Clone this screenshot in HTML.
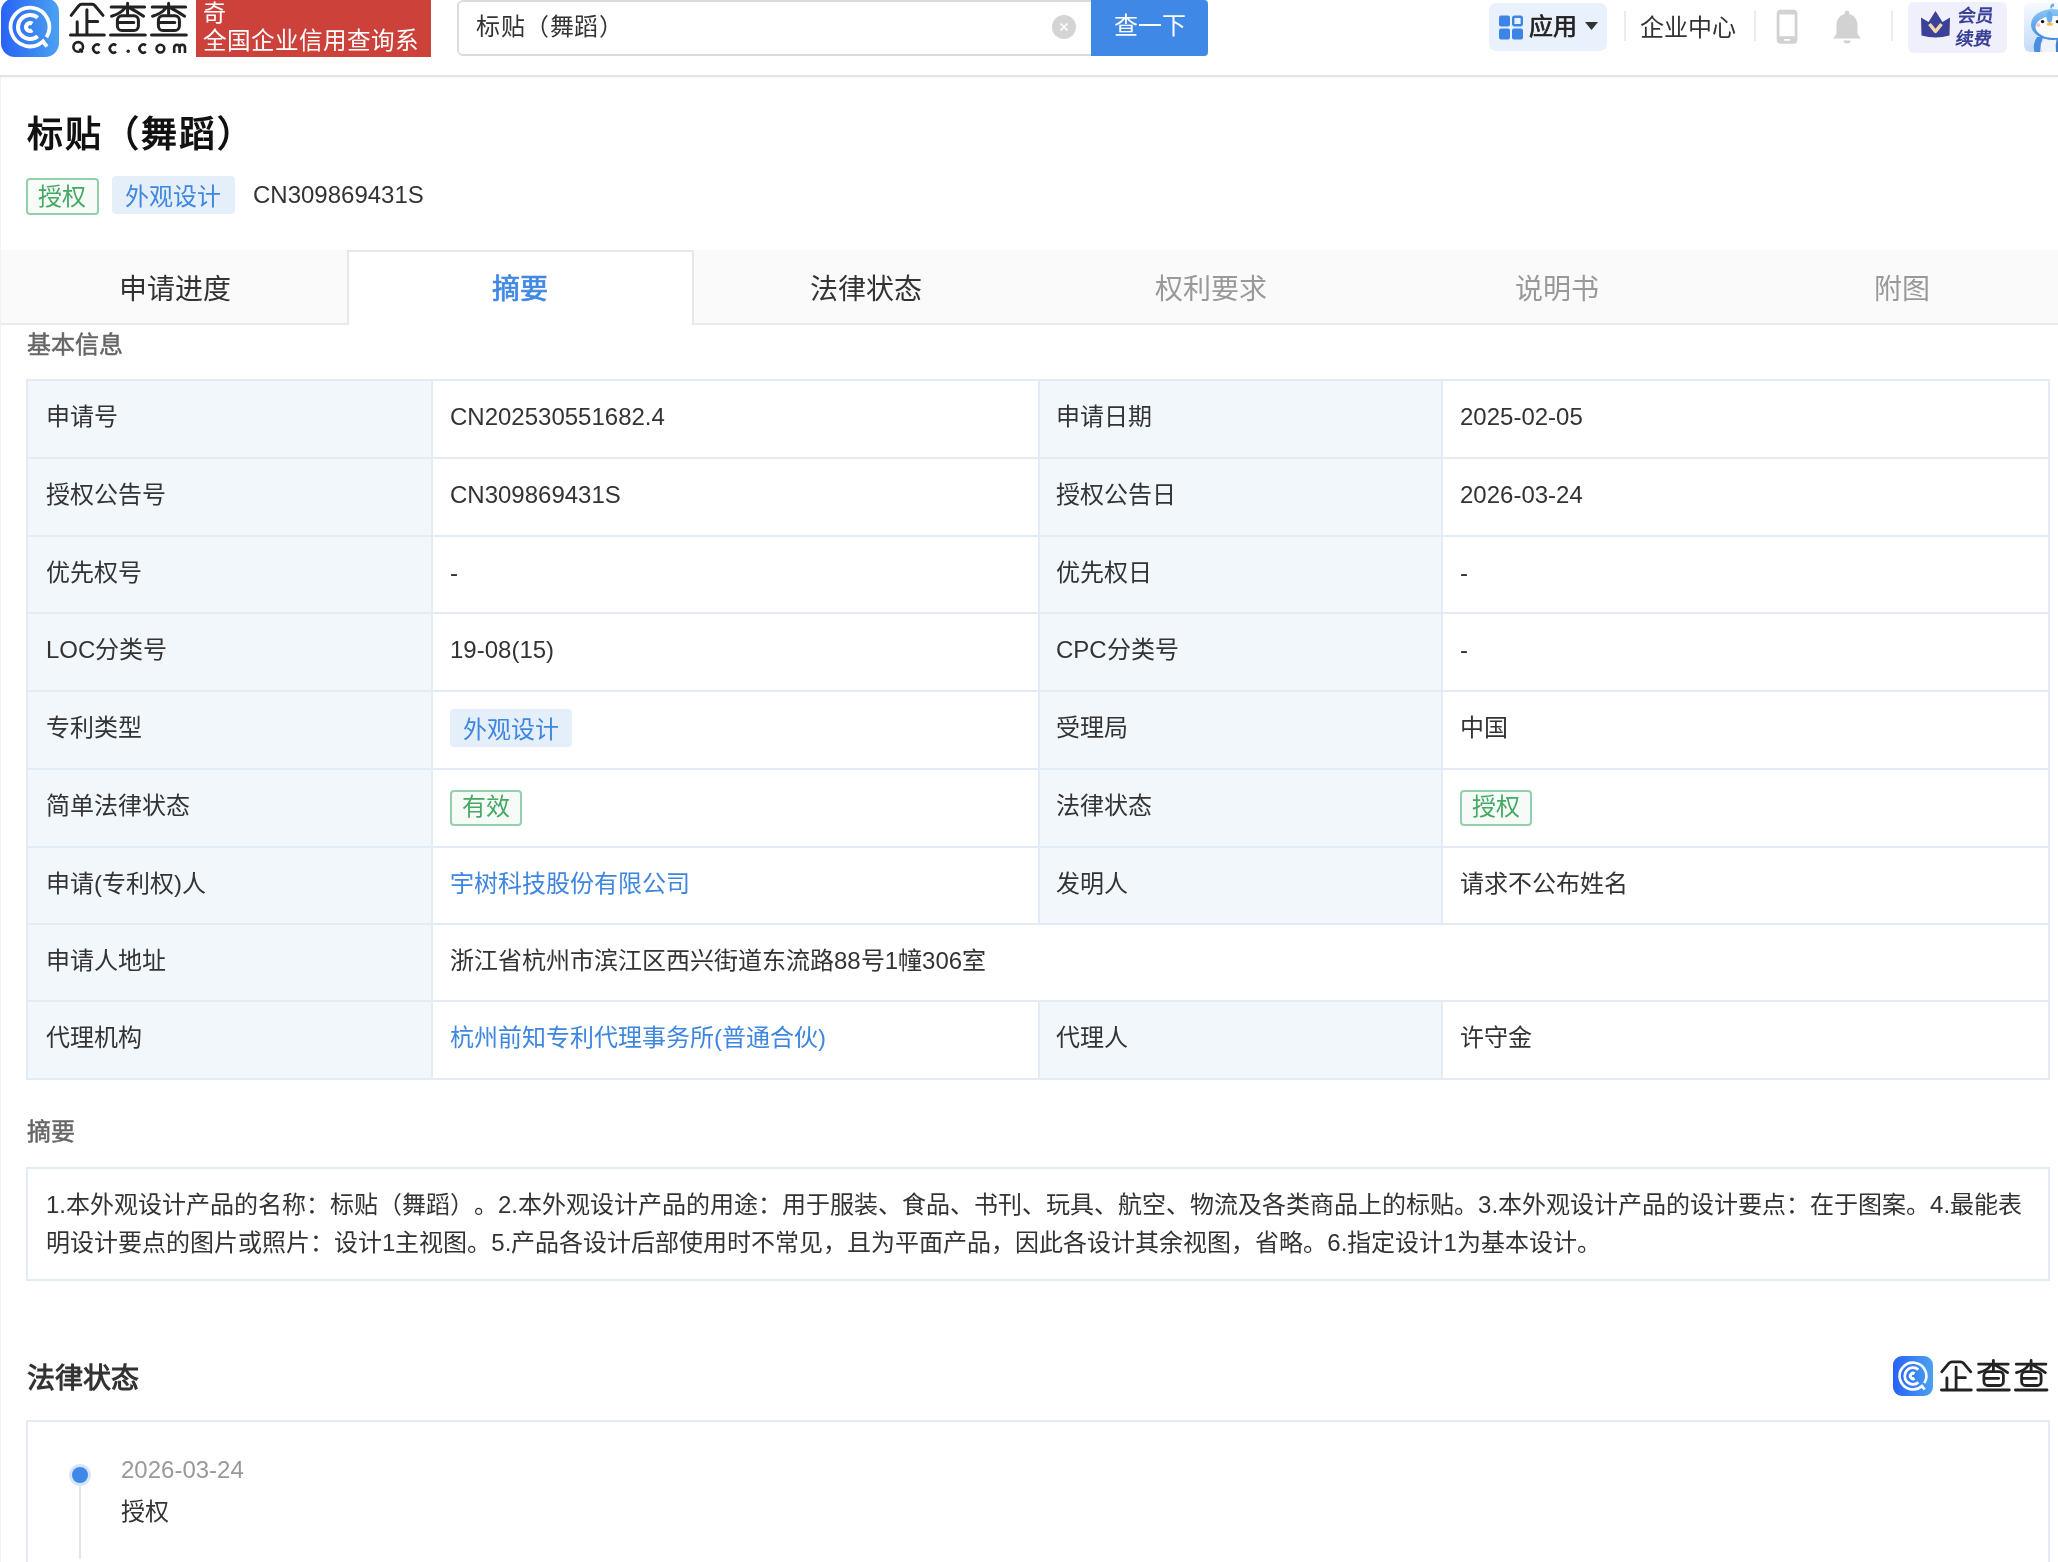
<!DOCTYPE html>
<html lang="zh-CN"><head><meta charset="utf-8">
<style>
*{margin:0;padding:0;box-sizing:border-box}
html,body{width:2058px;height:1562px;overflow:hidden;background:#fff}
body{font-family:"Liberation Sans",sans-serif;color:#333;position:relative;text-spacing-trim:space-all;will-change:transform;background:#fff}
.a{position:absolute;white-space:nowrap}
.hdr{position:absolute;left:0;top:0;width:2058px;height:77px;background:#fff;border-bottom:2px solid #e3e3e3;box-shadow:0 1px 3px rgba(0,0,0,0.035);z-index:2}
.lside{position:absolute;left:0;top:77px;width:1px;height:1485px;background:#f2f2f2}
.t24{font-size:24px;line-height:28px}
.tab{position:absolute;top:250px;height:75px;width:347px;background:#fafafa;border-bottom:2px solid #ebebeb;border-right:2px solid #ebebeb;font-size:28px;line-height:75px;padding-top:3px;text-align:center;color:#999}
.tab.act{background:#fff;border:2px solid #ebebeb;border-bottom:none;padding-top:0;color:#3f88e5;font-weight:bold}
.cell{position:absolute;display:flex;align-items:center;font-size:24px;line-height:28px;padding-bottom:4px;color:#333;white-space:nowrap}
.tb{background:#e4effa;color:#3e86e0;border-radius:4px;line-height:34px;height:38px;padding:4px 13px 0 13px;display:inline-block}
.tg{background:#f6fbf8;color:#45a865;border:2px solid #92d0ac;border-radius:4px;line-height:29px;height:36px;padding:0 10px 3px 10px;display:inline-block;position:relative;top:1.5px}
.tbl{position:absolute;left:26px;top:379px;width:2024px;height:701px;border:2px solid #e3ebf5;background:#fff}
.hl{position:absolute;left:26px;width:2024px;height:2px;background:#e3ebf5}
.vl{position:absolute;width:2px;background:#e3ebf5}
.lbg{position:absolute;background:#f2f7fc}
.lab{position:absolute;font-size:24px;line-height:28px;color:#333;white-space:nowrap}
.val{position:absolute;font-size:24px;line-height:28px;color:#333;white-space:nowrap}
.blue{color:#3e86e0}
.tagb{position:absolute;background:#e4effa;color:#3e86e0;border-radius:4px;font-size:24px;line-height:34px;padding:4px 0 0 13px;white-space:nowrap}
.tagg{position:absolute;background:#f6fbf8;color:#45a865;border:2px solid #92d0ac;border-radius:4px;font-size:24px;line-height:32px;padding:0 10px;white-space:nowrap}
</style></head>
<body>
<div class="hdr">
  <!-- logo icon -->
  <svg class="a" style="left:1px;top:-2px" width="58" height="59" viewBox="0 0 58 59">
    <defs><linearGradient id="lg" x1="0" y1="0" x2="1" y2="0"><stop offset="0" stop-color="#2862f6"/><stop offset="1" stop-color="#4ba1f1"/></linearGradient></defs>
    <rect x="0" y="0" width="58" height="59" rx="14" fill="url(#lg)"/>
    <g fill="none" stroke="#fff" stroke-width="3.8">
      <path d="M45.45 39.28 A19.4 19.4 0 1 0 41.98 43.42 L45.9 48.6"/>
      <path d="M36.71 19.81 A12 12 0 1 0 36.71 38.19" stroke-width="4"/>
      <path d="M31.29 25.72 A4 4 0 1 0 31.29 32.28" stroke-width="4.2"/>
    </g>
  </svg>
  <!-- logo text -->
  <svg class="a" style="left:0;top:0" width="195" height="60" viewBox="0 0 195 60">
    <g fill="none" stroke="#222" stroke-width="3" stroke-linecap="round" stroke-linejoin="round">
      <path d="M71.2 15.4 L78.4 6.2 Q80 4.3 81.7 4.3 L92.2 4.3 Q93.8 4.3 95.4 6.2 L103 15.4"/>
      <path d="M86.9 9.8 V34.4 M86.9 21.5 H97.7 M77.2 21.7 V34.4 M70.5 35.1 H104.3"/>
      <g id="cha">
      <path d="M111.2 6.9 H144.6 M127.6 3.2 V14.1 M124.8 8.2 Q120.5 13.8 111.5 16.2 M130.4 8.4 Q137 11.8 143.6 16.2"/>
      <rect x="117.4" y="15.7" width="21" height="14.8" rx="4.6"/>
      <path d="M118.4 22.6 H133.8 M110.5 35.1 H145.3"/>
      </g>
      <use href="#cha" x="41"/>
    </g>
    <g fill="none" stroke="#222" stroke-width="2.6">
      <circle cx="78.2" cy="46.9" r="4.8"/>
      <path d="M79.5 48.8 L82.6 52.5" stroke-width="2.4"/>
      <path d="M99.6 45.4 A4 4 0 1 0 99.6 51.8"/>
      <path d="M116.2 45.4 A4 4 0 1 0 116.2 51.8"/>
      <path d="M145.9 45.4 A4 4 0 1 0 145.9 51.8"/>
      <circle cx="160.4" cy="48.6" r="3.9"/>
      <path d="M174.2 53 V48 Q174.2 44.8 177 44.8 Q179.6 44.8 179.6 48 V53 M179.6 48 Q179.6 44.8 182.3 44.8 Q185 44.8 185 48 V53"/>
    </g>
    <circle cx="128.2" cy="51.3" r="1.7" fill="#222"/>
  </svg>
  <!-- red banner -->
  <div class="a" style="left:196px;top:0;width:235px;height:57px;background:#cc413a"></div>
  <div class="a" style="left:203px;top:0px;font-size:23px;line-height:26px;color:#fff">奇</div>
  <div class="a" style="left:203px;top:28px;font-size:23.6px;line-height:26px;color:#fff">全国企业信用查询系</div>
  <!-- search -->
  <div class="a" style="left:457px;top:0;width:640px;height:56px;border:2px solid #dcdcdc;border-radius:6px;background:#fff"></div>
  <div class="a" style="left:476px;top:13px;font-size:24px;line-height:28px;color:#333;letter-spacing:0.5px">标贴（舞蹈）</div>
  <div class="a" style="left:1052px;top:15px;width:24px;height:24px;border-radius:12px;background:#d4d4d4"></div>
  <svg class="a" style="left:1052px;top:15px" width="24" height="24"><path d="M8.5 8.5 L15.5 15.5 M15.5 8.5 L8.5 15.5" stroke="#fff" stroke-width="1.6"/></svg>
  <div class="a" style="left:1091px;top:0;width:117px;height:56px;background:#3f88e5;border-radius:0 4px 4px 0;color:#fff;font-size:24px;line-height:52px;text-align:center">查一下</div>
  <!-- right nav -->
  <div class="a" style="left:1489px;top:3px;width:118px;height:48px;background:#e9f1fd;border-radius:7px"></div>
  <svg class="a" style="left:1499px;top:15px" width="25" height="25" viewBox="0 0 25 25">
    <rect x="0" y="0.5" width="11" height="11" rx="2" fill="#3c84e6"/>
    <rect x="14.2" y="1.7" width="8.6" height="8.6" rx="1.5" fill="none" stroke="#3c84e6" stroke-width="2.4"/>
    <rect x="0" y="13.5" width="11" height="11" rx="2" fill="#3c84e6"/>
    <rect x="13" y="13.5" width="11" height="11" rx="2" fill="#3c84e6"/>
  </svg>
  <div class="a" style="left:1529px;top:13px;font-size:24px;line-height:28px;color:#222;-webkit-text-stroke:0.7px #222">应用</div>
  <svg class="a" style="left:1585px;top:22px" width="14" height="9"><path d="M0 0 H13 L6.5 8 Z" fill="#333"/></svg>
  <div class="a" style="left:1624px;top:11px;width:2px;height:30px;background:#ebebeb"></div>
  <div class="a" style="left:1640px;top:14px;font-size:24px;line-height:28px;color:#333">企业中心</div>
  <div class="a" style="left:1754px;top:11px;width:2px;height:30px;background:#ebebeb"></div>
  <svg class="a" style="left:1776px;top:9px" width="22" height="36" viewBox="0 0 22 36">
    <rect x="0.7" y="0.8" width="20.7" height="34" rx="4" fill="#d2d2d2"/>
    <rect x="3.5" y="5.5" width="15.2" height="21.7" fill="#fff"/>
    <rect x="8" y="30" width="6.4" height="1.8" rx="0.9" fill="#fff"/>
  </svg>
  <svg class="a" style="left:1832px;top:9px" width="30" height="36" viewBox="0 0 30 36">
    <path d="M15 1.5 a2.3 2.3 0 0 1 2.3 2.3 v1.2 C23 6.6 25.5 11 25.5 17 v8 l3.5 4.5 H1 l3.5 -4.5 v-8 C4.5 11 7 6.6 12.7 5 v-1.2 A2.3 2.3 0 0 1 15 1.5 Z" fill="#d2d2d2"/>
    <path d="M11.5 31.5 a3.5 3 0 0 0 7 0 Z" fill="#d2d2d2"/>
  </svg>
  <div class="a" style="left:1891px;top:11px;width:2px;height:30px;background:#ebebeb"></div>
  <div class="a" style="left:1908px;top:2px;width:99px;height:51px;background:#f0f0fc;border-radius:6px"></div>
  <svg class="a" style="left:1920px;top:10px" width="31" height="30" viewBox="0 0 31 30">
    <path d="M1 7.5 L8.5 12 L15.5 1 L22.5 12 L30 7.5 L29.5 25.5 Q15.5 29.5 1.5 25.5 Z" fill="#3b4199"/>
    <path d="M9.5 14 L15.5 21.5 L21.5 14" fill="none" stroke="#f4d7a6" stroke-width="3.5" stroke-linejoin="round"/>
  </svg>
  <div class="a" style="left:1958px;top:6px;font-size:18px;line-height:21px;color:#3b4199;font-weight:bold;transform:skewX(-8deg)">会员</div>
  <div class="a" style="left:1956px;top:29px;font-size:18px;line-height:21px;color:#3b4199;font-weight:bold;transform:skewX(-8deg)">续费</div>
  <svg class="a" style="left:2024px;top:0" width="34" height="56" viewBox="0 0 34 56">
    <defs><linearGradient id="avbg" x1="0" y1="0" x2="0" y2="1"><stop offset="0" stop-color="#f7faff"/><stop offset="1" stop-color="#c3dbf7"/></linearGradient>
    <linearGradient id="avhd" x1="0" y1="0" x2="0" y2="1"><stop offset="0" stop-color="#8cc6f4"/><stop offset="1" stop-color="#3f8ae0"/></linearGradient></defs>
    <clipPath id="avc"><rect x="0" y="2.5" width="44" height="49.5" rx="6"/></clipPath>
    <g clip-path="url(#avc)">
    <rect x="0" y="2.5" width="44" height="49.5" rx="6" fill="url(#avbg)"/>
    <ellipse cx="30" cy="47" rx="13" ry="11" fill="#f1f3f8"/>
    <path d="M13 37 Q8 45 10.5 52 L16 52 Q16 44 19 37 Z" fill="#4a8de0"/>
    <path d="M33 37 Q31 45 32 52 L34 52 L34 37 Z" fill="#3f7fd6"/>
    <ellipse cx="29" cy="24.5" rx="22" ry="15.5" fill="url(#avhd)"/>
    <ellipse cx="30" cy="27" rx="18.5" ry="11" fill="#fbfbfd"/>
    <ellipse cx="25.5" cy="17" rx="3" ry="6" fill="#6aaeed"/>
    <circle cx="18.6" cy="21.6" r="1.7" fill="#111"/>
    <circle cx="33.5" cy="21.6" r="1.7" fill="#111"/>
    <circle cx="14.2" cy="25" r="2" fill="#f6c3d6"/>
    <ellipse cx="25.8" cy="24.2" rx="3" ry="1.6" fill="#f0c545"/>
    </g>
    <path d="M27.5 8.5 Q26 4.5 30 4.2 M28.3 6.5 Q29 5.8 30 6.2" fill="none" stroke="#5da4ea" stroke-width="1.5"/>
  </svg>
</div>
</div>
<div class="lside"></div>

<!-- Title -->
<div class="a" style="left:27px;top:113px;font-size:36px;line-height:44px;font-weight:bold;color:#111;letter-spacing:2px">标贴（舞蹈）</div>
<div class="tagg" style="left:26px;top:178px;height:37px;width:73px;line-height:33px">授权</div>
<div class="tagb" style="left:112px;top:176px;height:38px;width:123px">外观设计</div>
<div class="a" style="left:253px;top:181px;font-size:24px;line-height:28px;color:#333">CN309869431S</div>

<!-- tabs -->
<div class="a" style="left:1px;top:250px;width:2057px;height:75px;background:#fafafa;border-bottom:2px solid #ebebeb"></div>
<div class="a" style="left:347px;top:250px;width:347px;height:75px;background:#fff;border:2px solid #e8e8e8;border-bottom:none"></div>
<div class="a" style="left:24.5px;top:275px;width:300px;text-align:center;font-size:28px;line-height:30px;color:#333;">申请进度</div>
<div class="a" style="left:370px;top:275px;width:300px;text-align:center;font-size:28px;line-height:30px;color:#3f88e5;-webkit-text-stroke:0.7px #3f88e5;">摘要</div>
<div class="a" style="left:715.8px;top:275px;width:300px;text-align:center;font-size:28px;line-height:30px;color:#333;">法律状态</div>
<div class="a" style="left:1061px;top:275px;width:300px;text-align:center;font-size:28px;line-height:30px;color:#999;">权利要求</div>
<div class="a" style="left:1406.6px;top:275px;width:300px;text-align:center;font-size:28px;line-height:30px;color:#999;">说明书</div>
<div class="a" style="left:1752px;top:275px;width:300px;text-align:center;font-size:28px;line-height:30px;color:#999;">附图</div>

<div class="a" style="left:27px;top:331px;font-size:24px;line-height:28px;color:#666;-webkit-text-stroke:0.5px #666">基本信息</div>

<!-- table -->
<!--TBL-->
<div class="lbg" style="left:28px;top:381px;width:403px;height:76px"></div>
<div class="lbg" style="left:1040px;top:381px;width:401px;height:76px"></div>
<div class="lbg" style="left:28px;top:459px;width:403px;height:76px"></div>
<div class="lbg" style="left:1040px;top:459px;width:401px;height:76px"></div>
<div class="lbg" style="left:28px;top:537px;width:403px;height:75px"></div>
<div class="lbg" style="left:1040px;top:537px;width:401px;height:75px"></div>
<div class="lbg" style="left:28px;top:614px;width:403px;height:76px"></div>
<div class="lbg" style="left:1040px;top:614px;width:401px;height:76px"></div>
<div class="lbg" style="left:28px;top:692px;width:403px;height:76px"></div>
<div class="lbg" style="left:1040px;top:692px;width:401px;height:76px"></div>
<div class="lbg" style="left:28px;top:770px;width:403px;height:76px"></div>
<div class="lbg" style="left:1040px;top:770px;width:401px;height:76px"></div>
<div class="lbg" style="left:28px;top:848px;width:403px;height:75px"></div>
<div class="lbg" style="left:1040px;top:848px;width:401px;height:75px"></div>
<div class="lbg" style="left:28px;top:925px;width:403px;height:75px"></div>
<div class="lbg" style="left:28px;top:1002px;width:403px;height:76px"></div>
<div class="lbg" style="left:1040px;top:1002px;width:401px;height:76px"></div>
<div class="hl" style="top:379px"></div>
<div class="hl" style="top:457px"></div>
<div class="hl" style="top:535px"></div>
<div class="hl" style="top:612px"></div>
<div class="hl" style="top:690px"></div>
<div class="hl" style="top:768px"></div>
<div class="hl" style="top:846px"></div>
<div class="hl" style="top:923px"></div>
<div class="hl" style="top:1000px"></div>
<div class="hl" style="top:1078px"></div>
<div class="vl" style="left:26px;top:379px;height:701px"></div>
<div class="vl" style="left:2048px;top:379px;height:701px"></div>
<div class="vl" style="left:431px;top:379px;height:701px"></div>
<div class="vl" style="left:1038px;top:379px;height:80px"></div>
<div class="vl" style="left:1441px;top:379px;height:80px"></div>
<div class="vl" style="left:1038px;top:457px;height:80px"></div>
<div class="vl" style="left:1441px;top:457px;height:80px"></div>
<div class="vl" style="left:1038px;top:535px;height:79px"></div>
<div class="vl" style="left:1441px;top:535px;height:79px"></div>
<div class="vl" style="left:1038px;top:612px;height:80px"></div>
<div class="vl" style="left:1441px;top:612px;height:80px"></div>
<div class="vl" style="left:1038px;top:690px;height:80px"></div>
<div class="vl" style="left:1441px;top:690px;height:80px"></div>
<div class="vl" style="left:1038px;top:768px;height:80px"></div>
<div class="vl" style="left:1441px;top:768px;height:80px"></div>
<div class="vl" style="left:1038px;top:846px;height:79px"></div>
<div class="vl" style="left:1441px;top:846px;height:79px"></div>
<div class="vl" style="left:1038px;top:1000px;height:80px"></div>
<div class="vl" style="left:1441px;top:1000px;height:80px"></div>
<div class="cell" style="left:46px;top:381px;height:76px">申请号</div>
<div class="cell" style="left:450px;top:381px;height:76px">CN202530551682.4</div>
<div class="cell" style="left:1056px;top:381px;height:76px">申请日期</div>
<div class="cell" style="left:1460px;top:381px;height:76px">2025-02-05</div>
<div class="cell" style="left:46px;top:459px;height:76px">授权公告号</div>
<div class="cell" style="left:450px;top:459px;height:76px">CN309869431S</div>
<div class="cell" style="left:1056px;top:459px;height:76px">授权公告日</div>
<div class="cell" style="left:1460px;top:459px;height:76px">2026-03-24</div>
<div class="cell" style="left:46px;top:537px;height:75px">优先权号</div>
<div class="cell" style="left:450px;top:537px;height:75px">-</div>
<div class="cell" style="left:1056px;top:537px;height:75px">优先权日</div>
<div class="cell" style="left:1460px;top:537px;height:75px">-</div>
<div class="cell" style="left:46px;top:614px;height:76px">LOC分类号</div>
<div class="cell" style="left:450px;top:614px;height:76px">19-08(15)</div>
<div class="cell" style="left:1056px;top:614px;height:76px">CPC分类号</div>
<div class="cell" style="left:1460px;top:614px;height:76px">-</div>
<div class="cell" style="left:46px;top:692px;height:76px">专利类型</div>
<div class="cell" style="left:450px;top:692px;height:76px"><span class="tb">外观设计</span></div>
<div class="cell" style="left:1056px;top:692px;height:76px">受理局</div>
<div class="cell" style="left:1460px;top:692px;height:76px">中国</div>
<div class="cell" style="left:46px;top:770px;height:76px">简单法律状态</div>
<div class="cell" style="left:450px;top:770px;height:76px"><span class="tg">有效</span></div>
<div class="cell" style="left:1056px;top:770px;height:76px">法律状态</div>
<div class="cell" style="left:1460px;top:770px;height:76px"><span class="tg">授权</span></div>
<div class="cell" style="left:46px;top:848px;height:75px">申请(专利权)人</div>
<div class="cell blue" style="left:450px;top:848px;height:75px">宇树科技股份有限公司</div>
<div class="cell" style="left:1056px;top:848px;height:75px">发明人</div>
<div class="cell" style="left:1460px;top:848px;height:75px">请求不公布姓名</div>
<div class="cell" style="left:46px;top:925px;height:75px">申请人地址</div>
<div class="cell" style="left:450px;top:925px;height:75px">浙江省杭州市滨江区西兴街道东流路88号1幢306室</div>
<div class="cell" style="left:46px;top:1002px;height:76px">代理机构</div>
<div class="cell blue" style="left:450px;top:1002px;height:76px">杭州前知专利代理事务所(普通合伙)</div>
<div class="cell" style="left:1056px;top:1002px;height:76px">代理人</div>
<div class="cell" style="left:1460px;top:1002px;height:76px">许守金</div>
<!--/TBL-->

<div class="a" style="left:27px;top:1118px;font-size:24px;line-height:28px;color:#666;-webkit-text-stroke:0.5px #666">摘要</div>
<div class="a" style="left:26px;top:1167px;width:2024px;height:114px;border:2px solid #e3ebf5"></div>
<div class="a" style="left:46px;top:1186px;width:1990px;font-size:24px;line-height:38px;color:#333;white-space:normal">1.本外观设计产品的名称：标贴（舞蹈）。2.本外观设计产品的用途：用于服装、食品、书刊、玩具、航空、物流及各类商品上的标贴。3.本外观设计产品的设计要点：在于图案。4.最能表明设计要点的图片或照片：设计1主视图。5.产品各设计后部使用时不常见，且为平面产品，因此各设计其余视图，省略。6.指定设计1为基本设计。</div>

<div class="a" style="left:27px;top:1362px;font-size:28px;line-height:34px;color:#333;font-weight:bold">法律状态</div>

<svg class="a" style="left:1893px;top:1356px" width="40" height="40" viewBox="0 0 58 58">
    <rect x="0" y="0" width="58" height="58" rx="13" fill="url(#lg)"/>
    <g fill="none" stroke="#fff" stroke-width="3.8">
      <path d="M45.45 39.28 A19.4 19.4 0 1 0 41.98 43.42 L45.9 48.6"/>
      <path d="M36.71 19.81 A12 12 0 1 0 36.71 38.19" stroke-width="4"/>
      <path d="M31.29 25.72 A4 4 0 1 0 31.29 32.28" stroke-width="4.2"/>
    </g>
  </svg>
<svg class="a" style="left:1935px;top:1352px" width="123" height="46" viewBox="0 0 123 46">
  <g fill="none" stroke="#222" stroke-width="2.8" stroke-linecap="round" stroke-linejoin="round">
    <path d="M6.7 19.8 L14 11.2 Q15.4 9.8 16.8 9.8 L25.7 9.8 Q27.1 9.8 28.5 11.2 L35.8 19.8"/>
    <path d="M21.1 15.1 V37.2 M21.1 25.7 H30.4 M11.9 26 V37.2 M6.4 38 H36.3"/>
    <g id="cha2">
      <path d="M43.6 12.2 H73.2 M58.4 8.4 V18.4 M55.8 13.2 Q52 18.5 43.8 20.6 M60.9 13.4 Q67 16.5 72.6 20.6"/>
      <rect x="48.9" y="19.6" width="19.5" height="13.9" rx="4"/>
      <path d="M50.3 26.3 H63.7 M42.7 38 H74.3"/>
    </g>
    <use href="#cha2" x="37.7"/>
  </g>
</svg>
<div class="a" style="left:26px;top:1420px;width:2024px;height:200px;border:2px solid #e3ebf5"></div>
<div class="a" style="left:69px;top:1464px;width:22px;height:22px;border-radius:11px;background:#d5e5fa"></div>
<div class="a" style="left:72px;top:1467px;width:16px;height:16px;border-radius:8px;background:#3f88e5"></div>
<div class="a" style="left:79px;top:1486px;width:2px;height:73px;background:#e6e6e6"></div>
<div class="a" style="left:121px;top:1456px;font-size:24px;line-height:28px;color:#999">2026-03-24</div>
<div class="a" style="left:121px;top:1498px;font-size:24px;line-height:28px;color:#333">授权</div>
</body></html>
